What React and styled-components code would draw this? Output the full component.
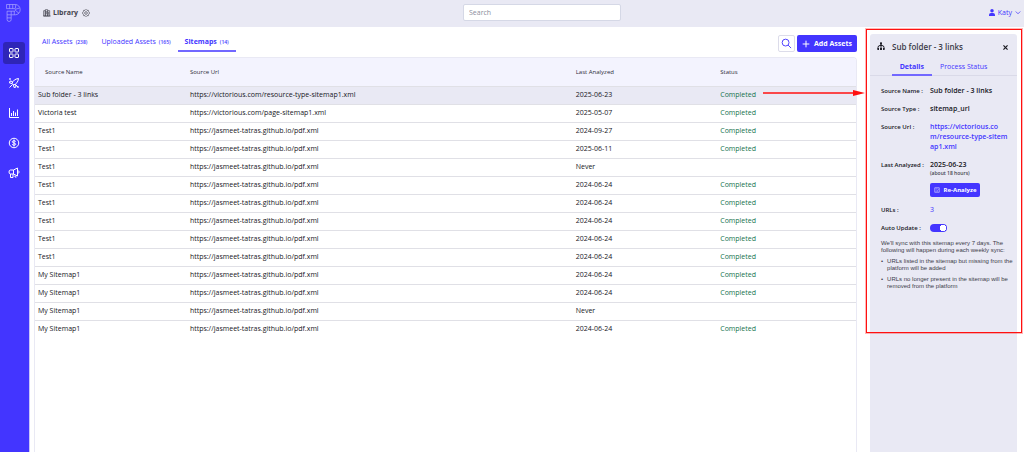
import React, { useState } from 'react'
import styled, { createGlobalStyle, css } from 'styled-components'

const GlobalStyle = createGlobalStyle`
    * {
        box-sizing: border-box;
    }

    body {
        margin: 0;
        background: #ffffff;
        font-family: 'Open Sans', 'Noto Sans', sans-serif;
        font-size: 7px;
        line-height: 10px;
        color: #16161d;
    }

    button, input {
        font-family: inherit;
        font-size: inherit;
        line-height: inherit;
    }

    button {
        padding: 0;
        border: 0;
        background: none;
        color: inherit;
        cursor: pointer;
    }

    a {
        color: inherit;
        text-decoration: none;
    }

    svg {
        display: block;
        flex: none;
    }
`

const Page = styled.div`
    display: flex;
    height: 100vh;
    overflow: hidden;
`

const Sidebar = styled.nav`
    display: flex;
    flex-direction: column;
    align-items: center;
    gap: 8px;
    width: 30px;
    flex: none;
    padding: 4px 2px 0 0;
    background: #4335ff;
    border-right: 1px solid #c9c5f8;
    color: #ffffff;
`

const LogoLink = styled.a`
    margin-bottom: 12px;
    color: #b3acff;
`

const NavLink = styled.a`
    display: flex;
    align-items: center;
    justify-content: center;
    width: 22px;
    height: 22px;
    border-radius: 3px;
    ${props => props.$active && css`
        background: #2f25b8;
    `}
`

const Main = styled.div`
    display: flex;
    flex-direction: column;
    flex: 1;
    min-width: 0;
`

const TopBar = styled.header`
    display: grid;
    grid-template-columns: 21fr 158px 20fr;
    align-items: center;
    flex: none;
    height: 27px;
    padding: 0 3px 2px 13px;
    background: #e9e9f4;
`

const Heading = styled.div`
    display: flex;
    align-items: center;
    gap: 2px;
    color: #44444e;
`

const Title = styled.h1`
    margin: 0 2px 0 0;
    font-size: 7px;
    line-height: 12px;
    font-weight: 700;
`

const Search = styled.input`
    width: 100%;
    height: 17px;
    padding: 0 5px;
    border: 1px solid #d5d8e6;
    border-radius: 2px;
    background: #ffffff;

    &::placeholder {
        color: #8b8e9c;
        opacity: 1;
    }
`

const UserButton = styled.button`
    display: flex;
    align-items: center;
    justify-self: end;
    gap: 3px;
    color: #4335ff;
`

const Content = styled.div`
    display: flex;
    flex: 1;
    min-height: 0;
    padding: 0 2px 0 4px;
`

const Assets = styled.main`
    display: flex;
    flex-direction: column;
    flex: 1;
    min-width: 0;
    padding-right: 9px;
`

const Toolbar = styled.div`
    display: flex;
    justify-content: space-between;
    flex: none;
    height: 30px;
`

const Tabs = styled.div`
    display: flex;
    padding: 7px 0 0 1px;
`

const Tab = styled.button`
    display: flex;
    align-items: center;
    gap: 3px;
    height: ${props => props.$compact ? '16px' : '18px'};
    padding: 0 ${props => props.$compact ? '8px' : '7px 1px'};
    border-bottom: 2px solid transparent;
    color: #4335ff;
    ${props => props.$active && css`
        border-color: #7268ff;
        font-weight: 700;
    `}
`

const Count = styled.span`
    font-size: 5px;
    font-weight: 600;
`

const Actions = styled.div`
    display: flex;
    gap: 2px;
    padding: 8px 0 5px;
`

const SearchButton = styled.button`
    display: flex;
    align-items: center;
    justify-content: center;
    width: 17px;
    border: 1px solid #dcdcea;
    border-radius: 2px;
    color: #4335ff;
`

const PrimaryButton = styled.button`
    display: flex;
    align-items: center;
    justify-content: center;
    gap: 4px;
    width: ${props => props.$small ? '50px' : '60px'};
    height: ${props => props.$small ? '14px' : '17px'};
    border-radius: 2px;
    background: #4335ff;
    color: #ffffff;
    font-size: ${props => props.$small ? '6px' : '7px'};
    font-weight: 700;
`

const TableFrame = styled.div`
    flex: 1;
    min-height: 0;
    border: 1px solid #e9e9f4;
    border-bottom: 0;
    border-radius: 4px 4px 0 0;
    overflow: hidden;
`

const Table = styled.table`
    width: 100%;
    table-layout: fixed;
    border-collapse: collapse;
    text-align: left;
`

const HeadCell = styled.th`
    width: ${props => props.$width};
    height: 28px;
    padding: 0 0 0 ${props => props.$first ? '10px' : '3px'};
    background: #f3f3fe;
    font-size: 6px;
    font-weight: 400;
    color: #2c2c38;
`

const Row = styled.tr`
    height: 18px;
    border-top: 1px solid #e0e0e6;
    background: ${props => props.$selected ? '#e9e9f4' : '#ffffff'};
`

const Cell = styled.td`
    padding: 0 0 0 3px;
    color: ${props => props.$done ? '#14724d' : 'inherit'};
`

const Highlight = styled.div`
    position: relative;
    width: 156px;
    flex: none;
    padding: 7px 5px 0 4px;
`

const Outline = styled.div`
    position: absolute;
    top: 2px;
    left: 0;
    right: 0;
    height: 304px;
    border: 1px solid #ff1010;
    outline: 1px solid rgba(255, 16, 16, 0.3);
    pointer-events: none;
`

const Arrow = styled.svg`
    position: absolute;
    top: 63px;
    right: 157px;
`

const Panel = styled.aside`
    height: 100%;
    border-radius: 3px 3px 0 0;
    background: #e9e9f4;
`

const PanelHeader = styled.header`
    display: flex;
    align-items: center;
    gap: 7px;
    height: 26px;
    padding: 0 8px 0 7px;
`

const PanelTitle = styled.h2`
    flex: 1;
    margin: 0;
    font-size: 8px;
    line-height: 12px;
    font-weight: 600;
    color: #3c3c48;
`

const PanelTabs = styled.div`
    display: flex;
    justify-content: center;
    height: 16px;
    border-bottom: 1px solid #dadae8;
`

const Details = styled.dl`
    display: grid;
    grid-template-columns: 49px 1fr;
    row-gap: 8px;
    margin: 0;
    padding: 10px 4px 0 11px;
`

const Term = styled.dt`
    font-size: 6px;
    font-weight: 600;
`

const Value = styled.dd`
    margin: 0;
    font-weight: ${props => props.$plain ? 400 : 600};

    a {
        color: #4335ff;
    }
`

const Age = styled.div`
    margin-bottom: 6px;
    font-size: 5px;
    line-height: 7px;
    color: #44444e;
`

const Toggle = styled.input`
    display: block;
    appearance: none;
    width: 17px;
    height: 8px;
    margin: 1px 0;
    border-radius: 4px;
    background: radial-gradient(circle at 13px 4px, #ffffff 3px, #4335ff 3px);

    &:not(:checked) {
        background: radial-gradient(circle at 4px 4px, #ffffff 3px, #9a9daa 3px);
    }
`

const Notes = styled.div`
    padding: 7px 2px 0 11px;
    font-family: 'Liberation Sans', sans-serif;
    font-size: 6px;
    line-height: 7px;
    color: #3c3c48;

    p {
        margin: 0;
    }

    ul {
        margin: 4px 0 0;
        padding: 0;
        list-style: none;
    }

    li {
        display: flex;
        gap: 4px;
    }

    li::before {
        content: '•';
    }

    li + li {
        margin-top: 4px;
    }
`

const Icon = ({ size = 12, stroke = 2, children }) => (
    <svg width={size} height={size} viewBox="0 0 24 24" fill="none" stroke="currentColor" strokeWidth={stroke} aria-hidden="true">
        {children}
    </svg>
)

const Logo = () => (
    <svg width="15" height="18" viewBox="0 0 29 35" fill="none" stroke="currentColor" strokeWidth="1.3" aria-hidden="true">
        <path d="M1 1h17a9.500 10 0 0 1 0 20h-8v9a4 4 0 0 1-8 0V14h15a3 3 0 0 0 0-5H1z" />
        <path d="M7 1v8M13 1v8M19 1l-1 8M26 8l-7 2M25 18l-6-5M16 14v7M10 14v7M2 21h8M2 27h8" />
    </svg>
)

const navItems = [
    {
        name: 'Library',
        icon: <><rect x="3" y="3" width="7" height="7" rx="1" /><rect x="14" y="3" width="7" height="7" rx="1" /><rect x="3" y="14" width="7" height="7" rx="1" /><rect x="14" y="14" width="7" height="7" rx="1" /></>
    },
    {
        name: 'Campaigns',
        icon: <><path d="M8 13c2-6 6-9 13-10-1 7-4 11-10 13zM8 13l3 3M9 9L4 8l-1 4 5 1M15 15l1 5-4 1-1-5M3 21l5-5M15 15l5 5" /><circle cx="4" cy="4" r="1" /><circle cx="20" cy="20" r="1" /></>
    },
    {
        name: 'Analytics',
        icon: <path d="M3 2v19h19M7 18v-6M11 18V8M15 18v-7M19 18V5" />
    },
    {
        name: 'Billing',
        icon: <><circle cx="12" cy="12" r="9.500" /><path d="M15.500 9c-1-2-7-2-7 .5 0 3 7 2 7 5 0 2.500-6 2.500-7.200 0M12 5v14" /></>
    },
    {
        name: 'Promotion',
        icon: <><path d="M11 6H5q-3 0-3 4t3 4h6zM11 6l8-4v16l-8-4M5 14v7h5v-7M19 7c4 0 4 6 0 6M14 17v3h3" /></>
    }
]

const jasmeet = 'https://jasmeet-tatras.github.io/pdf.xml'

const rows = [
    ['Sub folder - 3 links', 'https://victorious.com/resource-type-sitemap1.xml', '2025-06-23', 'Completed'],
    ['Victoria test', 'https://victorious.com/page-sitemap1.xml', '2025-05-07', 'Completed'],
    ['Test1', jasmeet, '2024-09-27', 'Completed'],
    ['Test1', jasmeet, '2025-06-11', 'Completed'],
    ['Test1', jasmeet, 'Never', ''],
    ['Test1', jasmeet, '2024-06-24', 'Completed'],
    ['Test1', jasmeet, '2024-06-24', 'Completed'],
    ['Test1', jasmeet, '2024-06-24', 'Completed'],
    ['Test1', jasmeet, '2024-06-24', 'Completed'],
    ['Test1', jasmeet, '2024-06-24', 'Completed'],
    ['My Sitemap1', jasmeet, '2024-06-24', 'Completed'],
    ['My Sitemap1', jasmeet, '2024-06-24', 'Completed'],
    ['My Sitemap1', jasmeet, 'Never', ''],
    ['My Sitemap1', jasmeet, '2024-06-24', 'Completed']
]

const tabs = [
    { name: 'All Assets', count: 238 },
    { name: 'Uploaded Assets', count: 165 },
    { name: 'Sitemaps', count: 14 }
]

const SourcePanel = () => {
    const [autoUpdate, setAutoUpdate] = useState(true)

    return (
        <Panel>
            <PanelHeader>
                <svg width="8" height="10" viewBox="0 0 16 20" fill="none" stroke="#1f1f28" strokeWidth="2" aria-hidden="true">
                    <path d="M8 1v14M2 15v-4q0-4 4-4h4q4 0 4 4v4" />
                    <path d="M6 1h4v4H6zM1 12h3v4H1zM6 12h4v4H6zM12 12h3v4h-3z" fill="#1f1f28" stroke="none" />
                </svg>
                <PanelTitle>Sub folder - 3 links</PanelTitle>
                <button aria-label="Close">
                    <Icon size={7} stroke={4}><path d="M5 5l14 14M19 5L5 19" /></Icon>
                </button>
            </PanelHeader>
            <PanelTabs>
                <Tab $active $compact>Details</Tab>
                <Tab $compact>Process Status</Tab>
            </PanelTabs>
            <Details>
                <Term>Source Name :</Term>
                <Value>Sub folder - 3 links</Value>
                <Term>Source Type :</Term>
                <Value>sitemap_url</Value>
                <Term>Source Url :</Term>
                <Value>
                    <a href="#source">https://victorious.co<br />m/resource-type-sitem<br />ap1.xml</a>
                </Value>
                <Term>Last Analyzed :</Term>
                <Value>
                    2025-06-23
                    <Age>(about 18 hours)</Age>
                    <PrimaryButton $small>
                        <Icon size={6}><path d="M3 3h18v18H3zM7 8h4M14 7l4 4M7 16h4M14 13v5" /></Icon>
                        Re-Analyze
                    </PrimaryButton>
                </Value>
                <Term>URLs :</Term>
                <Value $plain><a href="#urls">3</a></Value>
                <Term><label htmlFor="auto-update">Auto Update :</label></Term>
                <Value>
                    <Toggle id="auto-update" type="checkbox" role="switch" checked={autoUpdate} onChange={() => setAutoUpdate(!autoUpdate)} />
                </Value>
            </Details>
            <Notes>
                <p>We'll sync with this sitemap every 7 days. The following will happen during each weekly sync:</p>
                <ul>
                    <li>URLs listed in the sitemap but missing from the platform will be added</li>
                    <li>URLs no longer present in the sitemap will be removed from the platform</li>
                </ul>
            </Notes>
        </Panel>
    )
}

const App = () => {
    const [active, setActive] = useState('Sitemaps')

    return (
        <>
            <GlobalStyle />
            <Page>
                <Sidebar>
                    <LogoLink href="#home" aria-label="Home"><Logo /></LogoLink>
                    {navItems.map(({ name, icon }, index) => (
                        <NavLink key={name} href={`#${name}`} aria-label={name} $active={index === 0}>
                            <Icon>{icon}</Icon>
                        </NavLink>
                    ))}
                </Sidebar>
                <Main>
                    <TopBar>
                        <Heading>
                            <Icon size={8}><path d="M2 21V5h5v16zM7 21V2h7v19zM14 21V5h6v16zM1 21h22M10 6v10M17 9v8" /></Icon>
                            <Title>Library</Title>
                            <Icon size={8}><path d="M12 1l3 3 4 0 1 4 3 4-3 4-1 4-4 0-3 3-3-3-4 0-1-4-3-4 3-4 1-4 4 0z" /><circle cx="12" cy="12" r="4" /></Icon>
                        </Heading>
                        <Search type="search" placeholder="Search" aria-label="Search" />
                        <UserButton>
                            <svg width="6" height="7" viewBox="0 0 12 14" fill="currentColor" aria-hidden="true"><circle cx="6" cy="3.500" r="3.500" /><path d="M0 14v-2q0-4 4-4h4q4 0 4 4v2z" /></svg>
                            Katy
                            <Icon size={6} stroke={3}><path d="M3 6l9 9 9-9" /></Icon>
                        </UserButton>
                    </TopBar>
                    <Content>
                        <Assets>
                            <Toolbar>
                                <Tabs>
                                    {tabs.map(({ name, count }) => (
                                        <Tab key={name} $active={active === name} onClick={() => setActive(name)}>
                                            {name} <Count>({count})</Count>
                                        </Tab>
                                    ))}
                                </Tabs>
                                <Actions>
                                    <SearchButton aria-label="Search assets">
                                        <Icon size={11}><circle cx="10" cy="10" r="7.500" /><path d="M15.500 15.500L22 22" /></Icon>
                                    </SearchButton>
                                    <PrimaryButton>
                                        <Icon size={8} stroke={3}><path d="M12 2v20M2 12h20" /></Icon>
                                        Add Assets
                                    </PrimaryButton>
                                </Actions>
                            </Toolbar>
                            <TableFrame>
                                <Table>
                                    <thead>
                                        <tr>
                                            <HeadCell $width="18.500%" $first>Source Name</HeadCell>
                                            <HeadCell $width="47%">Source Url</HeadCell>
                                            <HeadCell $width="17.600%">Last Analyzed</HeadCell>
                                            <HeadCell>Status</HeadCell>
                                        </tr>
                                    </thead>
                                    <tbody>
                                        {rows.map(([name, url, date, status], index) => (
                                            <Row key={index} $selected={index === 0}>
                                                <Cell>{name}</Cell>
                                                <Cell>{url}</Cell>
                                                <Cell>{date}</Cell>
                                                <Cell $done>{status}</Cell>
                                            </Row>
                                        ))}
                                    </tbody>
                                </Table>
                            </TableFrame>
                        </Assets>
                        <Highlight>
                            <SourcePanel />
                            <Outline />
                            <Arrow width="102" height="6" viewBox="0 0 102 6" aria-hidden="true">
                                <path d="M0 3h92" stroke="#ff1010" strokeWidth="1.500" />
                                <path d="M90 0l12 3-12 3z" fill="#ff1010" />
                            </Arrow>
                        </Highlight>
                    </Content>
                </Main>
            </Page>
        </>
    )
}

export default App
